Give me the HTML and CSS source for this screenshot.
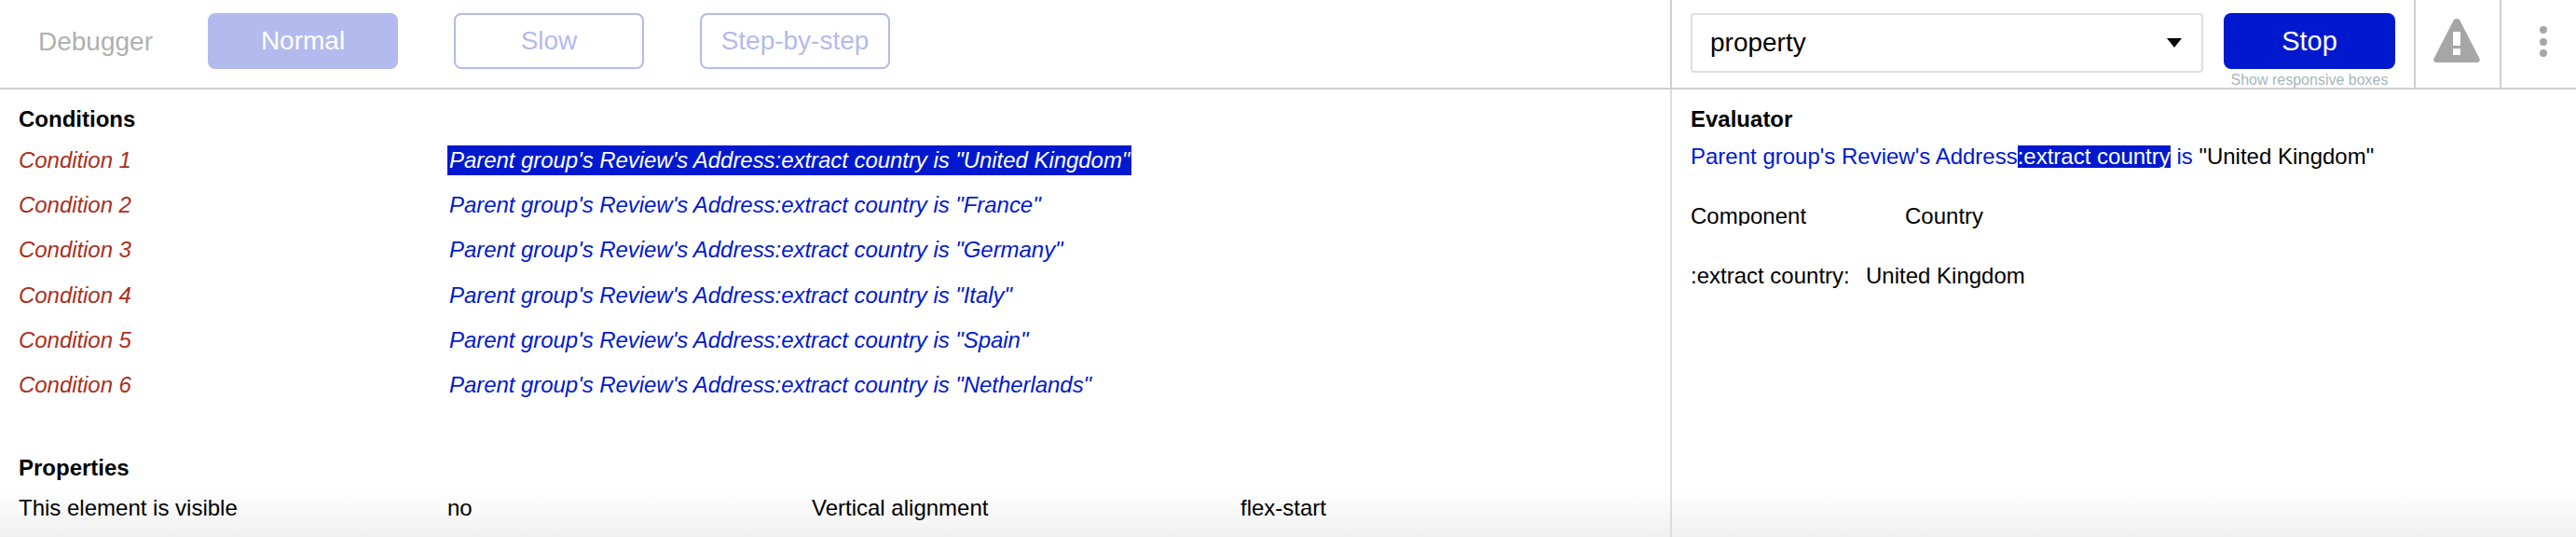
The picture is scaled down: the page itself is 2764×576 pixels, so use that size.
FILE: index.html
```html
<!DOCTYPE html>
<html lang="en">
  <head>
    <meta charset="UTF-8" />
    <title>Debugger</title>
    <link rel="stylesheet" href="styles.css">
  </head>
  <body>
    <div class="wrapper">
      <div class="topbar">
        <div class="controls">
          <span class="title">Debugger</span>
          <button class="btn btn-active">Normal</button>
          <button class="btn">Slow</button>
          <button class="btn">Step-by-step</button>
        </div>
        <div class="tools">
          <div class="select">
            <span>property</span>
            <span class="caret"></span>
          </div>
          <div class="stop-box">
            <button class="stop">Stop</button>
            <span class="hint">Show responsive boxes</span>
          </div>
        </div>
        <div class="icon-box warn">
          <svg width="50" height="48" viewBox="0 0 50 48">
            <path fill="#a6a6a6" d="M25 0c1.600 0 2.800 .9 3.600 2.300l20.600 40c1.300 2.600 .2 4.700-2.600 4.700H3.400C.6 47-.5 44.900 .8 42.300l20.600-40C22.200 .9 23.400 0 25 0z" />
            <rect x="21" y="14" width="8" height="15" fill="#fff" />
            <rect x="21" y="32" width="8" height="7" fill="#fff" />
          </svg>
        </div>
        <div class="icon-box dots">
          <i></i>
          <i></i>
          <i></i>
        </div>
      </div>

      <div class="main">
        <div class="left">
          <h1>Conditions</h1>
          <div class="conditions">
            <div class="cond">
              <span class="cond-name">Condition 1</span>
              <span class="cond-value selected">Parent group's Review's Address:extract country is "United Kingdom"</span>
            </div>
            <div class="cond">
              <span class="cond-name">Condition 2</span>
              <span class="cond-value">Parent group's Review's Address:extract country is "France"</span>
            </div>
            <div class="cond">
              <span class="cond-name">Condition 3</span>
              <span class="cond-value">Parent group's Review's Address:extract country is "Germany"</span>
            </div>
            <div class="cond">
              <span class="cond-name">Condition 4</span>
              <span class="cond-value">Parent group's Review's Address:extract country is "Italy"</span>
            </div>
            <div class="cond">
              <span class="cond-name">Condition 5</span>
              <span class="cond-value">Parent group's Review's Address:extract country is "Spain"</span>
            </div>
            <div class="cond">
              <span class="cond-name">Condition 6</span>
              <span class="cond-value">Parent group's Review's Address:extract country is "Netherlands"</span>
            </div>
          </div>
          <h1 class="props-title">Properties</h1>
          <div class="props">
            <span>This element is visible</span>
            <span>no</span>
            <span>Vertical alignment</span>
            <span>flex-start</span>
          </div>
        </div>

        <div class="right">
          <h1>Evaluator</h1>
          <p class="expr">
            <span class="blue">Parent group's Review's Address</span><span class="mark">:extract country</span><span class="blue"> is</span> "United Kingdom"
          </p>
          <div class="pair pair-head">
            <span>Component</span>
            <span>Country</span>
          </div>
          <div class="pair pair-result">
            <span>:extract country:</span>
            <span>United Kingdom</span>
          </div>
        </div>
      </div>
    </div>
  </body>
</html>
```

FILE: styles.css
```css
* {
  padding: 0;
  margin: 0;
  box-sizing: border-box;
}

html,
body {
  height: 100%;
  overflow: hidden;
  background: #fff;
}

body {
  font-family: "Liberation Sans", Arial, sans-serif;
  font-size: 24px;
  color: #000;
}

.wrapper {
  height: 576px;
  display: flex;
  flex-direction: column;
}

.topbar {
  height: 96px;
  display: flex;
  border-bottom: 2px solid #cfcfcf;
  flex-shrink: 0;
}

.controls {
  width: 1794px;
  display: flex;
  align-items: flex-start;
  padding-top: 14px;
  border-right: 2px solid #cfcfcf;
}

.title {
  width: 223px;
  padding-left: 41px;
  line-height: 62px;
  font-size: 28px;
  color: #b0b0b0;
}

.btn {
  width: 204px;
  height: 60px;
  margin-right: 60px;
  border: 2px solid #b3bbee;
  border-radius: 8px;
  background: #fff;
  color: #b3bbee;
  font-family: inherit;
  font-size: 28px;
}

.btn-active {
  background: #b3bbee;
  color: #fff;
}

.tools {
  width: 798px;
  display: flex;
  align-items: flex-start;
  gap: 22px;
  padding: 14px 0 0 20px;
  border-right: 2px solid #cfcfcf;
}

.select {
  width: 550px;
  height: 64px;
  display: flex;
  align-items: center;
  justify-content: space-between;
  padding: 0 21px 0 19px;
  border: 2px solid #dedede;
  border-radius: 4px;
  font-size: 28px;
}

.caret {
  width: 0;
  height: 0;
  border-left: 8px solid transparent;
  border-right: 8px solid transparent;
  border-top: 10px solid #000;
}

.stop-box {
  width: 184px;
  display: flex;
  flex-direction: column;
  align-items: center;
}

.stop {
  width: 184px;
  height: 60px;
  border: 0;
  border-radius: 8px;
  background: #0019cf;
  color: #fff;
  font-family: inherit;
  font-size: 29px;
}

.hint {
  margin-top: 2px;
  font-size: 16px;
  line-height: 20px;
  color: #a9b5ba;
  white-space: nowrap;
}

.icon-box {
  display: flex;
}

.warn {
  width: 92px;
  padding: 20px 0 0 19px;
  border-right: 2px solid #cfcfcf;
}

.dots {
  flex: 1;
  flex-direction: column;
  align-items: center;
  gap: 4.500px;
  padding: 28px 0 0 10px;
}

.dots i {
  width: 8px;
  height: 8px;
  border-radius: 50%;
  background: #a6a6a6;
}

.main {
  flex: 1;
  display: flex;
  min-height: 0;
  background: linear-gradient(rgba(240, 240, 240, 0), #f0f0f0) no-repeat bottom / 100% 50px;
}

.left {
  width: 1794px;
  padding: 20px 0 0 20px;
  border-right: 2px solid #dcdcdc;
  overflow: hidden;
}

.right {
  flex: 1;
  padding: 20px 0 0 20px;
}

h1 {
  font-size: 24px;
  font-weight: 700;
  line-height: 24px;
}

.conditions {
  margin-top: 16px;
}

.cond {
  height: 48.200px;
  display: flex;
  align-items: flex-start;
  font-style: italic;
  letter-spacing: -0.05px;
}

.cond-name {
  width: 460px;
  line-height: 32px;
  color: #a93020;
}

.cond-value {
  padding: 0 2px;
  line-height: 32px;
  color: #0019cf;
}

.selected {
  background: #0019cf;
  color: #fff;
}

.props-title {
  margin-top: 45px;
}

.props {
  display: grid;
  grid-template-columns: 460px 391px 460px 1fr;
  margin-top: 17px;
  line-height: 28px;
}

.expr {
  margin-top: 16px;
  line-height: 24px;
}

.blue {
  color: #0019cf;
}

.mark {
  display: inline-block;
  background: #0019cf;
  color: #fff;
}

.pair {
  display: flex;
}

.pair-head {
  margin-top: 38px;
  align-items: flex-start;
}

/* the descender of the p is cut off in this cell */
.pair-head span:first-child {
  width: 230px;
  height: 24px;
  overflow: hidden;
}

.pair-result {
  margin-top: 36px;
}

.pair-result span:first-child {
  width: 188px;
}
```
